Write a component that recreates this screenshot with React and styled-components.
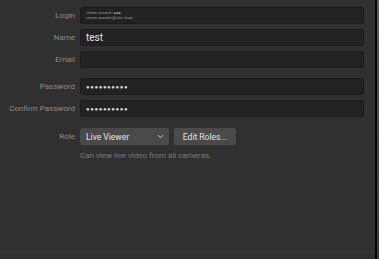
import React from 'react';
import styled, { createGlobalStyle } from 'styled-components';

const Global = createGlobalStyle`
  html, body {
    margin: 0;
    padding: 0;
    background: #303030;
    font-family: Roboto, 'Liberation Sans', sans-serif;
  }
`;

const Screen = styled.div`
  width: 379px;
  height: 259px;
  display: flex;
  background: #303030;
  overflow: hidden;
`;

const Window = styled.div`
  width: 377px;
  height: 259px;
  border-right: 2px solid #050505;
  box-sizing: border-box;
  display: flex;
  flex-direction: column;
`;

const Edge = styled.div`
  width: 2px;
  height: 259px;
  background: linear-gradient(#5c5c5c, #3a3a3a);
`;

const Panel = styled.div`
  height: 253px;
  background: #303030;
  border-bottom: 1px solid #3a3a3a;
  box-sizing: border-box;
  padding-top: 7px;
`;

const Form = styled.div`
  display: grid;
  grid-template-columns: 75px 284px;
  column-gap: 5px;
  row-gap: 5px;
  align-items: center;
`;

const Label = styled.div`
  text-align: right;
  font-size: 8px;
  color: #8c8c8c;
  line-height: 17px;
  white-space: nowrap;
`;

const Spacer = styled.div`
  grid-column: 1 / 3;
  height: ${p => p.h}px;
`;

const Field = styled.div`
  height: 17px;
  background: #222222;
  border: 1px solid #1c1c1c;
  box-sizing: border-box;
  border-radius: 2px;
  display: flex;
  align-items: center;
  padding-left: 5px;
  color: #e8e8e8;
  font-size: 10px;
`;

const Dots = styled.span`
  font-size: 6px;
  letter-spacing: 0.6px;
  color: #d8d8d8;
`;

const Obscured = styled.div`
  display: flex;
  flex-direction: column;
  gap: 2px;
  font-size: 3.2px;
  line-height: 3px;
  color: #b0b0b0;
  letter-spacing: 0.4px;
`;

const RoleRow = styled.div`
  display: flex;
  gap: 5px;
`;

const Select = styled.div`
  width: 89px;
  height: 17px;
  background: #4a4a4a;
  border-radius: 2px;
  display: flex;
  align-items: center;
  justify-content: space-between;
  padding: 0 5px 0 6px;
  box-sizing: border-box;
  color: #e4e4e4;
  font-size: 8.5px;
`;

const Button = styled.div`
  width: 62px;
  height: 17px;
  background: #4a4a4a;
  border-radius: 2px;
  display: flex;
  align-items: center;
  justify-content: center;
  color: #e4e4e4;
  font-size: 8.5px;
`;

const Hint = styled.div`
  grid-column: 2;
  font-size: 8px;
  color: #7a7a7a;
  margin-top: 1px;
`;

const Chevron = () => (
  <svg width="7" height="5" viewBox="0 0 7 5">
    <path d="M1 1.2 L3.5 3.6 L6 1.2" stroke="#cfcfcf" strokeWidth="1" fill="none" />
  </svg>
);

export default function App() {
  return (
    <Screen>
      <Global />
      <Window>
        <Panel>
          <Form>
            <Label>Login</Label>
            <Field>
              <Obscured>
                <span>viewer.account ■■■</span>
                <span>viewer.account@site.local</span>
              </Obscured>
            </Field>
            <Label>Name</Label>
            <Field>test</Field>
            <Label>Email</Label>
            <Field />
            <Spacer h={0} />
            <Label>Password</Label>
            <Field><Dots>●●●●●●●●●●</Dots></Field>
            <Label>Confirm Password</Label>
            <Field><Dots>●●●●●●●●●●</Dots></Field>
            <Spacer h={1} />
            <Label>Role</Label>
            <RoleRow>
              <Select>
                <span>Live Viewer</span>
                <Chevron />
              </Select>
              <Button>Edit Roles...</Button>
            </RoleRow>
            <Hint>Can view live video from all cameras.</Hint>
          </Form>
        </Panel>
      </Window>
      <Edge />
    </Screen>
  );
}
